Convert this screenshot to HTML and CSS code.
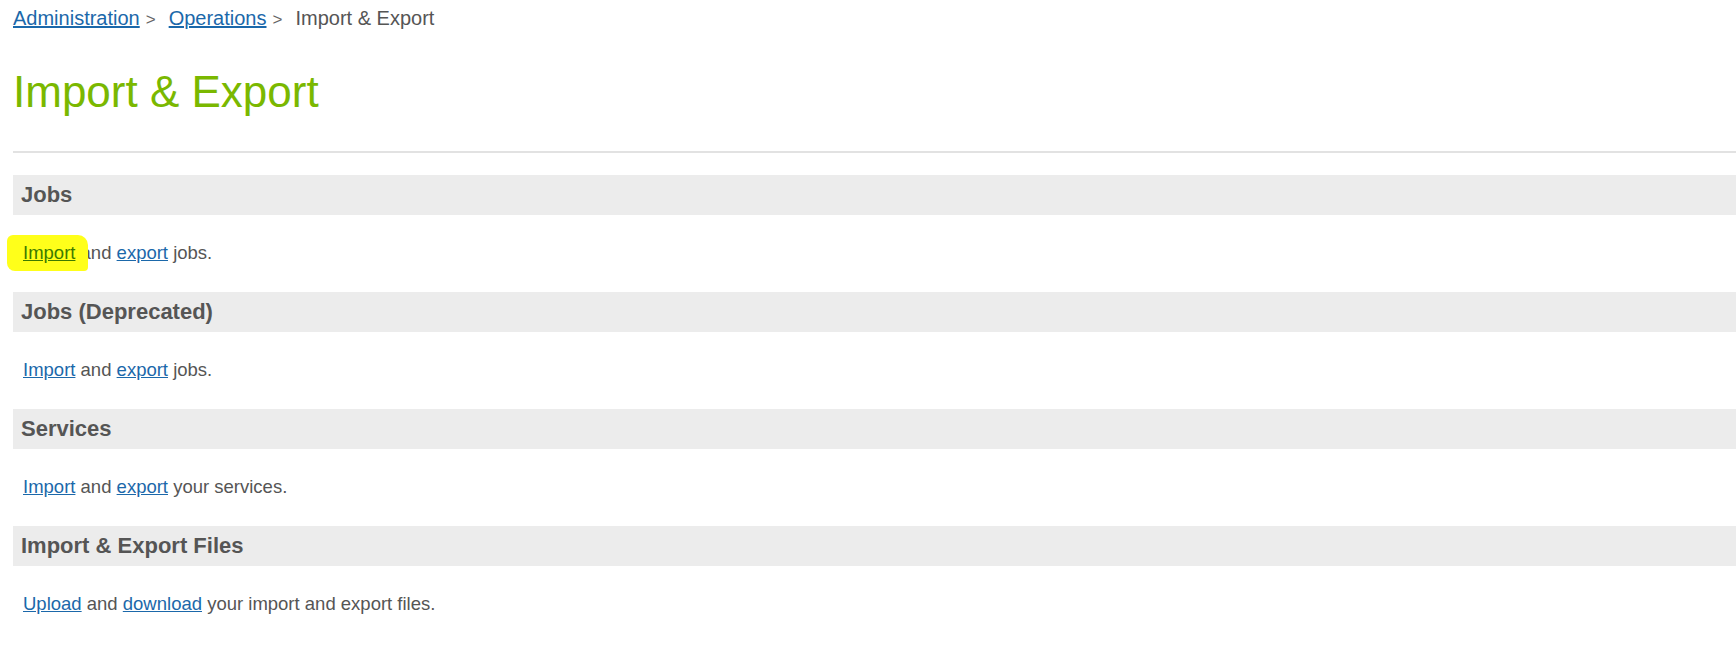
FILE: index.html
```html
<!DOCTYPE html>
<html lang="en">
<head>
<meta charset="utf-8">
<title>Import &amp; Export</title>
<link rel="stylesheet" href="styles.css">
</head>
<body>
<div class="page">
  <nav class="breadcrumb">
    <a href="#">Administration</a><span class="sep">&gt;</span><a href="#">Operations</a><span class="sep">&gt;</span><span class="current">Import &amp; Export</span>
  </nav>
  <h1 class="title">Import &amp; Export</h1>
  <hr class="rule">
  <section class="group">
    <h2 class="group-head">Jobs</h2>
    <p class="group-body"><a href="#" class="marked">Import</a> and <a href="#">export</a> jobs.</p>
  </section>
  <section class="group">
    <h2 class="group-head">Jobs (Deprecated)</h2>
    <p class="group-body"><a href="#">Import</a> and <a href="#">export</a> jobs.</p>
  </section>
  <section class="group">
    <h2 class="group-head">Services</h2>
    <p class="group-body"><a href="#">Import</a> and <a href="#">export</a> your services.</p>
  </section>
  <section class="group">
    <h2 class="group-head">Import &amp; Export Files</h2>
    <p class="group-body"><a href="#">Upload</a> and <a href="#">download</a> your import and export files.</p>
  </section>
</div>
</body>
</html>
```
FILE: styles.css
```css
html, body {
  margin: 0;
  padding: 0;
  background: #ffffff;
}
body {
  font-family: "Liberation Sans", Arial, sans-serif;
  color: #555555;
}
.page {
  padding-left: 13px;
}
a {
  color: #1b68aa;
  text-decoration: underline;
}
.breadcrumb {
  font-size: 20px;
  line-height: 24px;
  padding-top: 6px;
  color: #555555;
}
.breadcrumb .sep {
  margin: 0 13px 0 6px;
  color: #666666;
  font-size: 17px;
}
.title {
  margin: 34px 0 0 0;
  font-size: 44px;
  line-height: 52px;
  font-weight: normal;
  color: #7ab800;
}
.rule {
  margin: 33px 0 0 0;
  border: 0;
  height: 2px;
  background: #e2e2e2;
}
.group:first-of-type {
  margin-top: 22px;
}
.group-head {
  margin: 0;
  height: 40px;
  line-height: 40px;
  padding-left: 8px;
  background: #ececec;
  font-size: 22px;
  font-weight: bold;
  color: #555555;
}
.group-body {
  margin: 0;
  padding: 27px 0 28px 10px;
  font-size: 18.5px;
  line-height: 22px;
}
.marked {
  position: relative;
  color: #3d7a00;
  z-index: 0;
}
.marked::before {
  content: "";
  position: absolute;
  left: -16px;
  right: -13px;
  top: -7px;
  bottom: -8px;
  background: #ffff1a;
  border-radius: 6px 10px 4px 8px;
  z-index: -1;
}
```
